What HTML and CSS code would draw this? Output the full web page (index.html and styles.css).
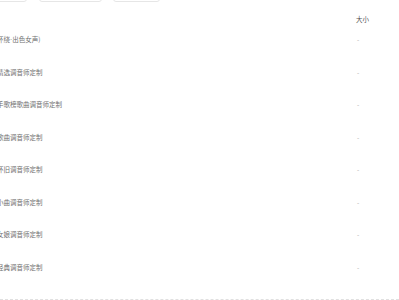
FILE: index.html
```html
<!DOCTYPE html>
<html lang="zh">
<head>
<meta charset="utf-8">
<link rel="stylesheet" href="styles.css">
</head>
<body>
<div class="toolbar">
  <span class="btn btn-a"></span>
  <span class="btn btn-b"></span>
  <span class="btn btn-c"></span>
</div>
<div class="table">
  <div class="row head"><span class="name"></span><span class="size">大小</span></div>
  <div class="row"><span class="name">环绕<span class="dot">·</span>出色女声)</span><span class="size dash">-</span></div>
  <div class="row"><span class="name">精选调音师定制</span><span class="size dash">-</span></div>
  <div class="row"><span class="name">手歌榜歌曲调音师定制</span><span class="size dash">-</span></div>
  <div class="row"><span class="name">歌曲调音师定制</span><span class="size dash">-</span></div>
  <div class="row"><span class="name">怀旧调音师定制</span><span class="size dash">-</span></div>
  <div class="row"><span class="name">小曲调音师定制</span><span class="size dash">-</span></div>
  <div class="row"><span class="name">女娘调音师定制</span><span class="size dash">-</span></div>
  <div class="row"><span class="name">经典调音师定制</span><span class="size dash">-</span></div>
</div>
</body>
</html>
```

FILE: styles.css
```css
html, body {
  margin: 0;
  padding: 0;
  background: #fff;
  width: 399px;
  height: 300px;
  overflow: hidden;
  font-family: "Noto Sans CJK SC", "Noto Sans", sans-serif;
}
.toolbar {
  display: flex;
  height: 2px;
  overflow: visible;
}
.btn {
  display: block;
  height: 24px;
  margin-top: -22px;
  border: 1px solid #e6e6e6;
  border-radius: 3px;
  box-sizing: border-box;
}
.btn-a { margin-left: -20px; width: 47px; }
.btn-b { margin-left: 12px; width: 63px; }
.btn-c { margin-left: 11px; width: 47px; }
.table {
  border-bottom: 1px dashed #e0e0e0;
  height: 298px;
  box-sizing: border-box;
}
.row {
  display: flex;
  height: 32.5px;
  padding-top: 1.5px;
  box-sizing: border-box;
  font-size: 6.5px;
  line-height: 8px;
  color: #707070;
}
.row.head {
  height: 31.5px;
  padding-top: 13.3px;
  color: #555;
}
.name {
  flex: 0 0 359px;
  margin-left: -3px;
  white-space: nowrap;
}
.dot {
  font-family: "Liberation Sans", sans-serif;
}
.size {
  flex: 1;
}
.dash {
  color: #aaa;
  padding-left: 1px;
}
```
